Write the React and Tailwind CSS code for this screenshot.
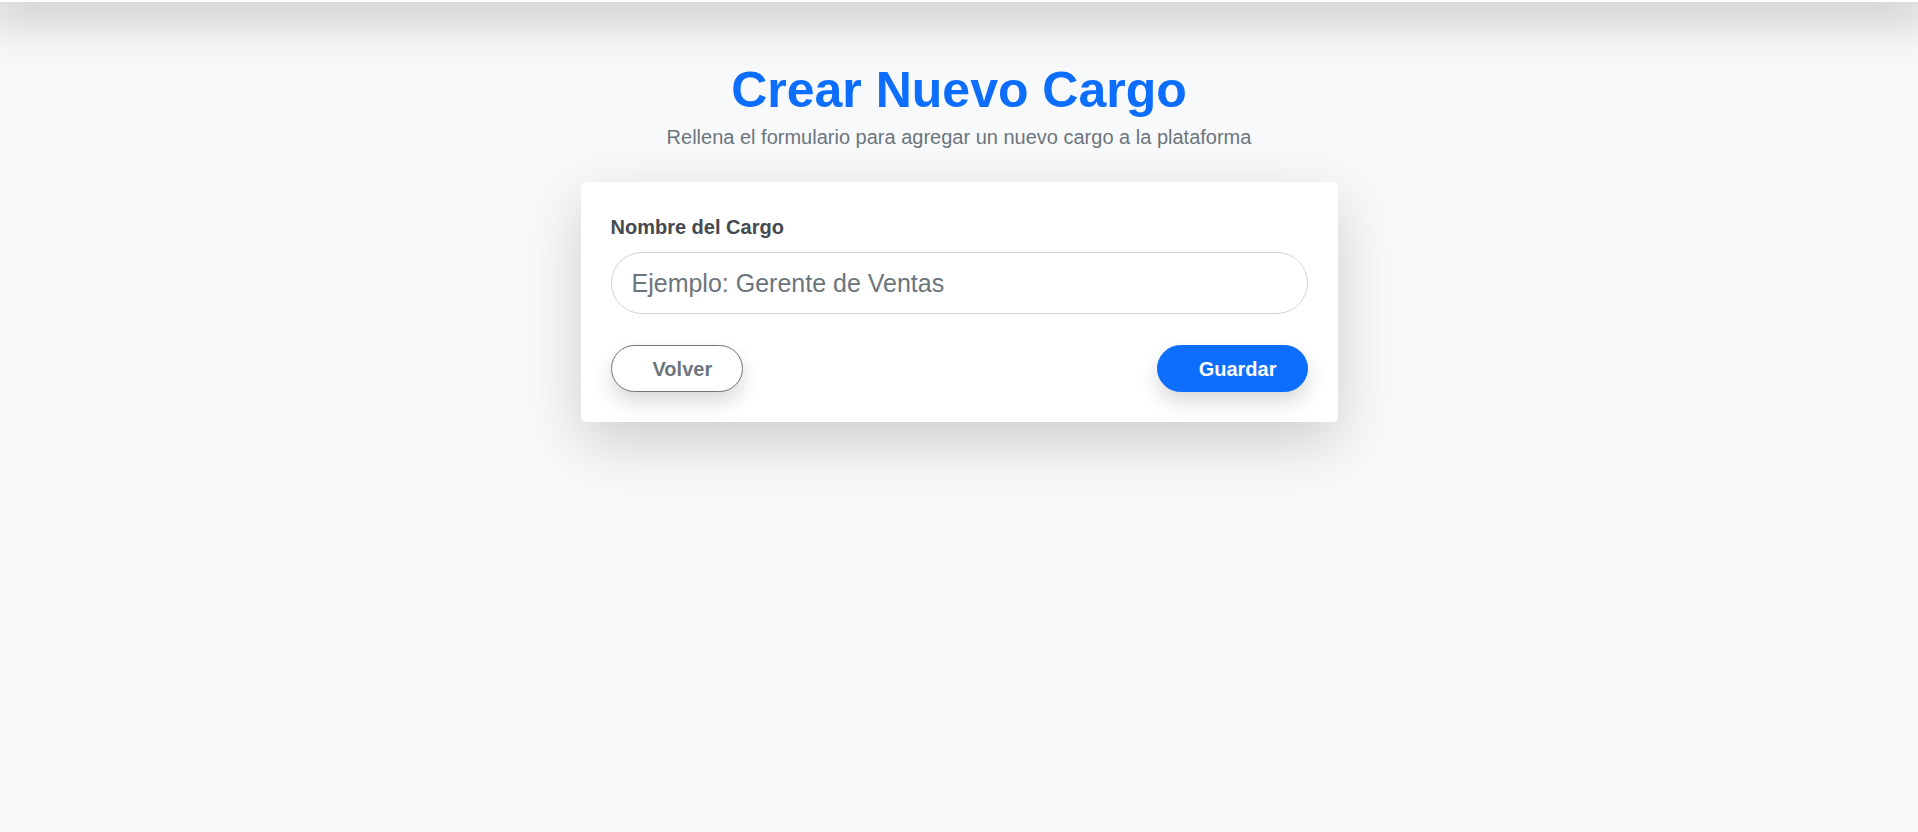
export default function App() {
  return (
    <div
      className="min-h-screen bg-[#f8f9fa] text-[#212529]"
      style={{ fontFamily: '"Liberation Sans", Arial, sans-serif' }}
    >
      {/* top bar: only its shadow shows */}
      <div className="h-[2px] bg-white shadow-[0_0_50px_16px_rgba(0,0,0,0.24)]" />

      <main className="flex flex-col items-center pt-[58px]">
        <h1 className="text-[50px] leading-[60px] font-bold text-[#0d6efd]">Crear Nuevo Cargo</h1>
        <p className="mt-[2px] text-[20px] leading-[30px] text-[#6c757d]">
          Rellena el formulario para agregar un nuevo cargo a la plataforma
        </p>

        <form
          className="mt-[30px] w-[757px] rounded-[5px] bg-white p-[30px] shadow-[0_20px_60px_rgba(0,0,0,0.175)]"
          onSubmit={(e) => e.preventDefault()}
        >
          <label className="block text-[20px] leading-[30px] font-bold text-[#444a50]">Nombre del Cargo</label>
          <input
            type="text"
            placeholder="Ejemplo: Gerente de Ventas"
            className="mt-[10px] block h-[62px] w-full rounded-full border border-[#ced4da] bg-white px-[20px] text-[25px] text-[#212529] outline-none placeholder:text-[#6c757d]"
          />

          <div className="mt-[31px] flex items-center justify-between">
            <button
              type="button"
              className="h-[47px] rounded-full border border-[#6c757d] bg-white pl-[41px] pr-[30px] text-[20px] leading-[30px] font-bold text-[#6c757d] shadow-[0_10px_20px_rgba(0,0,0,0.15)]"
            >
              Volver
            </button>
            <button
              type="submit"
              className="h-[47px] rounded-full border border-[#0d6efd] bg-[#0d6efd] pl-[41px] pr-[30px] text-[20px] leading-[30px] font-bold text-white shadow-[0_10px_20px_rgba(0,0,0,0.15)]"
            >
              Guardar
            </button>
          </div>
        </form>
      </main>
    </div>
  );
}
